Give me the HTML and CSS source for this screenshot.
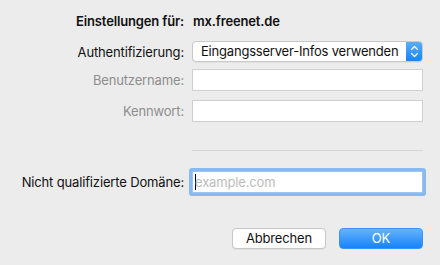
FILE: index.html
```html
<!DOCTYPE html>
<html lang="de">
<head>
<meta charset="utf-8">
<link rel="stylesheet" href="styles.css">
</head>
<body>
<div class="dialog">
  <div class="form">
    <div class="label head">Einstellungen für:</div>
    <div class="value head">mx.freenet.de</div>

    <div class="label row-popup">Authentifizierung:</div>
    <div class="popup row-popup">
      <span class="popup-text">Eingangsserver-Infos verwenden</span>
      <span class="popup-arrow">
        <svg width="17" height="21" viewBox="0 0 17 21"><path d="M5.5 8.5 L8.5 5.5 L11.5 8.5 M5.5 12.5 L8.5 15.5 L11.5 12.5" fill="none" stroke="#fff" stroke-width="1.3" stroke-linecap="round" stroke-linejoin="round"/></svg>
      </span>
    </div>

    <div class="label disabled row-user">Benutzername:</div>
    <div class="field row-user"></div>

    <div class="label disabled row-pass">Kennwort:</div>
    <div class="field row-pass"></div>

    <div class="sep"></div>

    <div class="label row-domain">Nicht qualifizierte Domäne:</div>
    <div class="field focus row-domain"><span class="caret"></span><span class="placeholder">example.com</span></div>
  </div>
  <div class="buttons">
    <button class="btn cancel">Abbrechen</button>
    <button class="btn ok">OK</button>
  </div>
</div>
</body>
</html>
```
FILE: styles.css
```css
html, body {
  margin: 0;
  padding: 0;
  background: #ececec;
}
body {
  width: 440px;
  height: 265px;
  overflow: hidden;
  font-family: Inter, "Liberation Sans", sans-serif;
  font-size: 13px;
  letter-spacing: -0.15px;
  color: #111;
}
.dialog {
  padding-top: 10px;
}
.form {
  display: grid;
  grid-template-columns: 185px 231px;
  column-gap: 7px;
  align-items: center;
}
.label {
  text-align: right;
  white-space: nowrap;
  padding-right: 1px;
}
.head {
  font-weight: 600;
  height: 22px;
  line-height: 22px;
}
.value.head {
  padding-left: 1px;
}
.disabled {
  color: #8e8e8e;
}
.row-popup { margin-top: 9px; }
.row-user { margin-top: 7px; }
.row-pass { margin-top: 9px; }
.row-domain { margin-top: 0; }

.popup {
  height: 21px;
  box-sizing: border-box;
  border: 1px solid #c9c9c9;
  border-radius: 4px;
  background: #fff;
  display: flex;
  align-items: center;
  overflow: hidden;
  box-shadow: 0 0.5px 0.5px rgba(0,0,0,0.08);
}
.popup-text {
  flex: 1;
  padding-left: 8px;
  line-height: 19px;
  letter-spacing: -0.2px;
}
.popup-arrow {
  width: 17px;
  height: 21px;
  margin: -1px -1px -1px 0;
  background: linear-gradient(#5db0fb, #1581fb);
  display: flex;
}
.field {
  height: 22px;
  box-sizing: border-box;
  border: 1px solid #cfcfcf;
  background: #fff;
}
.sep {
  grid-column: 2;
  height: 1px;
  background: #d6d6d6;
  margin-top: 28px;
  margin-bottom: 20px;
}
.focus {
  border-color: #9fc4ee;
  box-shadow: 0 0 0 3px #86baf0;
  border-radius: 1px;
  display: flex;
  align-items: center;
}
.caret {
  width: 1px;
  height: 16px;
  background: #000;
  margin-left: 2px;
}
.placeholder {
  color: #bcbcbc;
  margin-left: -1px;
}
.buttons {
  display: flex;
  justify-content: flex-end;
  gap: 13px;
  padding-right: 17px;
  margin-top: 35px;
}
.btn {
  font-family: inherit;
  font-size: 13px;
  letter-spacing: -0.15px;
  height: 21px;
  box-sizing: border-box;
  border-radius: 4px;
  padding: 0;
  line-height: 19px;
}
.cancel {
  width: 94px;
  background: #fff;
  border: 1px solid #c8c8c8;
  color: #111;
  box-shadow: 0 0.5px 0.5px rgba(0,0,0,0.1);
}
.ok {
  width: 84px;
  background: linear-gradient(#66b4fb, #1782fb);
  border: 1px solid #3a93f7;
  color: #fff;
}
```
